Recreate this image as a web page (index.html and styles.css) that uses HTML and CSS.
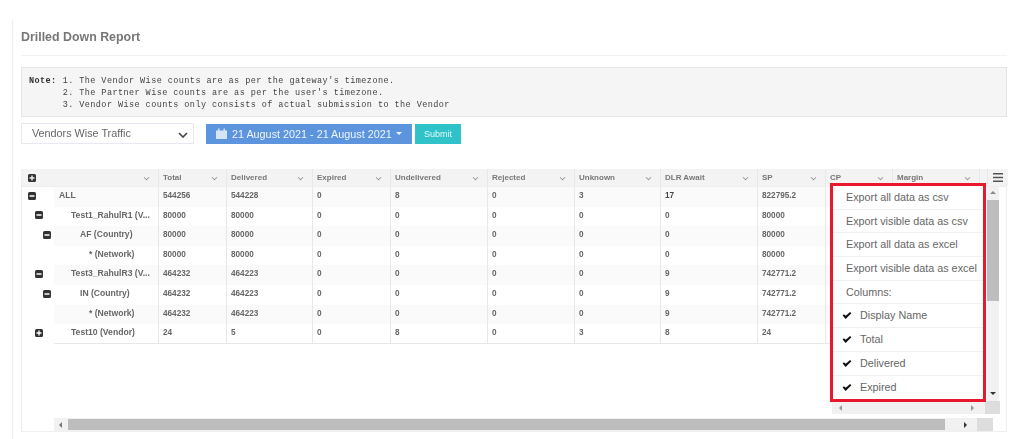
FILE: index.html
```html
<!DOCTYPE html>
<html lang="en">
<head>
<meta charset="utf-8">
<title>Drilled Down Report</title>
<link rel="stylesheet" href="styles.css">
</head>
<body>
<div class="page">
  <h1 class="title">Drilled Down Report</h1>
  <div class="note"><b>Note:</b><pre class="note-lines">1. The Vendor Wise counts are as per the gateway's timezone.
2. The Partner Wise counts are as per the user's timezone.
3. Vendor Wise counts only consists of actual submission to the Vendor</pre></div>
  <div class="controls">
    <div class="select">Vendors Wise Traffic
      <svg class="sel-chev" width="10" height="6" viewBox="0 0 10 6"><path d="M1 1l4 4 4-4" fill="none" stroke="#444" stroke-width="1.6"/></svg>
    </div>
    <div class="date-btn">
      <svg width="11" height="11" viewBox="0 0 11 11"><path d="M0 2.500h11V11H0zM2 0.500h1.500V3H2zM7.500 0.500H9V3H7.500z" fill="#d5e3f6"/></svg>
      <span>21 August 2021 - 21 August 2021</span><i class="caret"></i>
    </div>
    <div class="submit">Submit</div>
  </div>
  <div class="grid">
    <div class="head">
      <div class="c c0"><svg class="box" viewBox="0 0 8 8"><path d="M1.500 0h5A1.500 1.500 0 0 1 8 1.500v5A1.500 1.500 0 0 1 6.500 8h-5A1.500 1.500 0 0 1 0 6.500v-5A1.500 1.500 0 0 1 1.500 0zM3.300 1.500v1.800H1.500v1.400h1.800v1.800h1.400V4.700h1.800V3.300H4.700V1.500z" fill="#333"/></svg></div>
      <div class="c c1"><i class="chev"></i></div>
      <div class="c c2">Total<i class="chev"></i></div>
      <div class="c c3">Delivered<i class="chev"></i></div>
      <div class="c c4">Expired<i class="chev"></i></div>
      <div class="c c5">Undelivered<i class="chev"></i></div>
      <div class="c c6">Rejected<i class="chev"></i></div>
      <div class="c c7">Unknown<i class="chev"></i></div>
      <div class="c c8">DLR Await<i class="chev"></i></div>
      <div class="c c9">SP<i class="chev"></i></div>
      <div class="c c10">CP<i class="chev"></i></div>
      <div class="c c11">Margin<i class="chev"></i></div>
      <div class="c c12"><div class="menu-btn"><svg width="10" height="9" viewBox="0 0 10 9"><path d="M0 0h10v1.600H0zM0 3.700h10v1.600H0zM0 7.400h10V9H0z" fill="#555"/></svg></div></div>
    </div>
    <div class="row odd">
      <div class="c c0 l0"><svg class="box" viewBox="0 0 8 8"><path d="M1.500 0h5A1.500 1.500 0 0 1 8 1.500v5A1.500 1.500 0 0 1 6.500 8h-5A1.500 1.500 0 0 1 0 6.500v-5A1.500 1.500 0 0 1 1.500 0zM1.500 3.200v1.600h5V3.200z" fill="#333"/></svg></div>
      <div class="c c1 n0">ALL</div><div class="c c2">544256</div><div class="c c3">544228</div><div class="c c4">0</div><div class="c c5">8</div><div class="c c6">0</div><div class="c c7">3</div><div class="c c8 dk">17</div><div class="c c9">822795.2</div><div class="c c10"></div><div class="c c11"></div>
    </div>
    <div class="row">
      <div class="c c0 l1"><svg class="box" viewBox="0 0 8 8"><path d="M1.500 0h5A1.500 1.500 0 0 1 8 1.500v5A1.500 1.500 0 0 1 6.500 8h-5A1.500 1.500 0 0 1 0 6.500v-5A1.500 1.500 0 0 1 1.500 0zM1.500 3.200v1.600h5V3.200z" fill="#333"/></svg></div>
      <div class="c c1 n1">Test1_RahulR1 (V...</div><div class="c c2">80000</div><div class="c c3">80000</div><div class="c c4">0</div><div class="c c5">0</div><div class="c c6">0</div><div class="c c7">0</div><div class="c c8">0</div><div class="c c9">80000</div><div class="c c10"></div><div class="c c11"></div>
    </div>
    <div class="row odd">
      <div class="c c0 l2"><svg class="box" viewBox="0 0 8 8"><path d="M1.500 0h5A1.500 1.500 0 0 1 8 1.500v5A1.500 1.500 0 0 1 6.500 8h-5A1.500 1.500 0 0 1 0 6.500v-5A1.500 1.500 0 0 1 1.500 0zM1.500 3.200v1.600h5V3.200z" fill="#333"/></svg></div>
      <div class="c c1 n2">AF (Country)</div><div class="c c2">80000</div><div class="c c3">80000</div><div class="c c4">0</div><div class="c c5">0</div><div class="c c6">0</div><div class="c c7">0</div><div class="c c8">0</div><div class="c c9">80000</div><div class="c c10"></div><div class="c c11"></div>
    </div>
    <div class="row">
      <div class="c c0"></div>
      <div class="c c1 n3">* (Network)</div><div class="c c2">80000</div><div class="c c3">80000</div><div class="c c4">0</div><div class="c c5">0</div><div class="c c6">0</div><div class="c c7">0</div><div class="c c8">0</div><div class="c c9">80000</div><div class="c c10"></div><div class="c c11"></div>
    </div>
    <div class="row odd">
      <div class="c c0 l1"><svg class="box" viewBox="0 0 8 8"><path d="M1.500 0h5A1.500 1.500 0 0 1 8 1.500v5A1.500 1.500 0 0 1 6.500 8h-5A1.500 1.500 0 0 1 0 6.500v-5A1.500 1.500 0 0 1 1.500 0zM1.500 3.200v1.600h5V3.200z" fill="#333"/></svg></div>
      <div class="c c1 n1">Test3_RahulR3 (V...</div><div class="c c2">464232</div><div class="c c3">464223</div><div class="c c4">0</div><div class="c c5">0</div><div class="c c6">0</div><div class="c c7">0</div><div class="c c8">9</div><div class="c c9">742771.2</div><div class="c c10"></div><div class="c c11"></div>
    </div>
    <div class="row">
      <div class="c c0 l2"><svg class="box" viewBox="0 0 8 8"><path d="M1.500 0h5A1.500 1.500 0 0 1 8 1.500v5A1.500 1.500 0 0 1 6.500 8h-5A1.500 1.500 0 0 1 0 6.500v-5A1.500 1.500 0 0 1 1.500 0zM1.500 3.200v1.600h5V3.200z" fill="#333"/></svg></div>
      <div class="c c1 n2">IN (Country)</div><div class="c c2">464232</div><div class="c c3">464223</div><div class="c c4">0</div><div class="c c5">0</div><div class="c c6">0</div><div class="c c7">0</div><div class="c c8">9</div><div class="c c9">742771.2</div><div class="c c10"></div><div class="c c11"></div>
    </div>
    <div class="row odd">
      <div class="c c0"></div>
      <div class="c c1 n3">* (Network)</div><div class="c c2">464232</div><div class="c c3">464223</div><div class="c c4">0</div><div class="c c5">0</div><div class="c c6">0</div><div class="c c7">0</div><div class="c c8">9</div><div class="c c9">742771.2</div><div class="c c10"></div><div class="c c11"></div>
    </div>
    <div class="row last">
      <div class="c c0 l1"><svg class="box" viewBox="0 0 8 8"><path d="M1.500 0h5A1.500 1.500 0 0 1 8 1.500v5A1.500 1.500 0 0 1 6.500 8h-5A1.500 1.500 0 0 1 0 6.500v-5A1.500 1.500 0 0 1 1.500 0zM3.300 1.500v1.800H1.500v1.400h1.800v1.800h1.400V4.700h1.800V3.300H4.700V1.500z" fill="#333"/></svg></div>
      <div class="c c1 n1">Test10 (Vendor)</div><div class="c c2">24</div><div class="c c3">5</div><div class="c c4">0</div><div class="c c5">8</div><div class="c c6">0</div><div class="c c7">3</div><div class="c c8">8</div><div class="c c9">24</div><div class="c c10"></div><div class="c c11"></div>
    </div>
    <div class="hscroll">
      <span class="arrow-l"></span><span class="thumb"></span><span class="arrow-r"></span><span class="corner"></span>
    </div>
    <div class="vscroll">
      <span class="arrow-u"></span><span class="vthumb"></span><span class="arrow-d"></span>
    </div>
    <div class="menu-hscroll"><span class="arrow-l"></span><span class="arrow-r"></span><span class="corner"></span></div>
    <ul class="menu">
      <li>Export all data as csv</li>
      <li>Export visible data as csv</li>
      <li>Export all data as excel</li>
      <li>Export visible data as excel</li>
      <li>Columns:</li>
      <li class="chk"><svg width="10" height="7" viewBox="0 0 11 8"><path d="M0.500 4l1.500-1.500L4 4.300 9 0l1.500 1.500L4 8z" fill="#111"/></svg>Display Name</li>
      <li class="chk"><svg width="10" height="7" viewBox="0 0 11 8"><path d="M0.500 4l1.500-1.500L4 4.300 9 0l1.500 1.500L4 8z" fill="#111"/></svg>Total</li>
      <li class="chk"><svg width="10" height="7" viewBox="0 0 11 8"><path d="M0.500 4l1.500-1.500L4 4.300 9 0l1.500 1.500L4 8z" fill="#111"/></svg>Delivered</li>
      <li class="chk"><svg width="10" height="7" viewBox="0 0 11 8"><path d="M0.500 4l1.500-1.500L4 4.300 9 0l1.500 1.500L4 8z" fill="#111"/></svg>Expired</li>
    </ul>
  </div>
</div>
</body>
</html>
```
FILE: styles.css
```css
* { box-sizing: border-box; }
html, body { margin: 0; height: 100%; background: #fff; overflow: hidden; }
body { padding: 20px 0 0 12px; font-family: "Liberation Sans", Arial, sans-serif; color: #666; }
.page { height: 419px; border-left: 1px solid #eee; padding: 0 22px 0 8px; filter: blur(0.6px); }
.title { margin: 0 0 11px; height: 36px; padding: 11px 0 0; border-bottom: 1px solid #f2f2f2; font-size: 12.400px; line-height: 13px; font-weight: 700; color: #777; }
.note { display: flex; gap: 6px; margin: 0; height: 50px; padding: 7px 7px; background: #f5f5f5; border: 1px solid #e6e6e6; font: 8.500px/12.200px "Liberation Mono", monospace; letter-spacing: 0.430px; color: #444; }
.note b { color: #333; flex: none; }
.note-lines { margin: 0; font: inherit; letter-spacing: inherit; white-space: pre; }
.controls { display: flex; align-items: center; margin-top: 6px; height: 21px; }
.select { position: relative; width: 173px; height: 21px; border: 1px solid #e6e9f0; background: #fff; font-size: 10.800px; line-height: 18px; padding-left: 10px; color: #666; }
.sel-chev { position: absolute; right: 5px; top: 8px; }
.date-btn { margin-left: 12px; width: 206px; height: 20px; background: #5c94de; color: #eef4fc; font-size: 10.800px; display: flex; align-items: center; padding-left: 10px; gap: 5px; white-space: nowrap; }
.caret { display: inline-block; border: 3px solid transparent; border-top-color: #eef4fc; border-bottom: 0; margin-left: -1px; }
.submit { margin-left: 3px; width: 46px; height: 20px; background: #30c2c9; color: #e4f8f9; font-size: 9px; line-height: 20px; text-align: center; }
.grid { position: relative; margin-top: 25px; height: 263px; border: 1px solid #efefef; border-top: 0; }
.head, .row { display: flex; height: 19.600px; }
.head { height: 18px; background: #f3f3f3; border-bottom: 1px solid #eee; font-size: 8px; font-weight: 700; color: #777; }
.row { font-size: 8.200px; font-weight: 700; color: #666; }
.row.odd .c:not(.c0) { background: rgba(0, 0, 0, 0.02); }
.c { position: relative; flex: none; height: 100%; padding-left: 4px; border-right: 1px solid #e8e8e8; line-height: 17px; white-space: nowrap; }
.c0 { width: 32px; border-right: 0; padding: 0; display: flex; align-items: center; padding-bottom: 2px; }
.head .c0 { padding-bottom: 0; }
.c1 { width: 105px; font-size: 8.600px; }
.c2 { width: 68px; }
.c3 { width: 86px; }
.c4 { width: 78px; }
.c5 { width: 97px; }
.c6 { width: 87px; }
.c7 { width: 86px; }
.c8 { width: 97px; }
.c9 { width: 68px; }
.c10 { width: 67px; }
.c11 { width: 87px; }
.c12 { width: 28px; border: 0; display: flex; padding: 0 0 0 7px; background: #f3f3f3; }
.menu-btn { flex: 1; display: flex; align-items: center; justify-content: center; border-left: 1px solid #e8e8e8; }
.box { width: 8px; height: 8px; margin-left: 6px; display: block; }
.l1 .box { margin-left: 13px; }
.l2 .box { margin-left: 21px; }
.n0 { padding-left: 5px; }
.n1 { padding-left: 17px; }
.n2 { padding-left: 26px; }
.n3 { padding-left: 35px; }
.dk { color: #444; }
.row.last .c:not(.c0) { border-bottom: 1px solid #e8e8e8; }
.chev { position: absolute; right: 9px; top: 6px; width: 5px; height: 5px; border-right: 1px solid #888; border-bottom: 1px solid #888; transform: rotate(45deg) scale(.8); }
.hscroll { position: absolute; left: 32px; bottom: 0; width: 939px; height: 13px; display: flex; align-items: center; background: #f1f1f1; }
.thumb { display: block; margin-left: 6px; width: 877px; height: 11px; background: #bdbdbd; }
.arrow-l, .arrow-r { display: block; flex: none; width: 0; height: 0; border: 3px solid transparent; }
.arrow-l { margin-left: 5px; border-right-color: #777; border-left: 0; }
.hscroll .arrow-r { margin-left: 19px; border-left-color: #333; border-right: 0; }
.corner { display: block; flex: none; margin-left: auto; width: 16px; height: 100%; background: #ddd; }
.vscroll { position: absolute; right: 7px; top: 18px; width: 12px; height: 214px; background: #f1f1f1; display: flex; flex-direction: column; align-items: center; }
.arrow-u { display: block; margin-top: 4px; border: 3px solid transparent; border-bottom-color: #888; border-top: 0; }
.vthumb { display: block; margin-top: 6px; width: 100%; height: 101px; background: #bdbdbd; }
.arrow-d { display: block; margin-top: auto; margin-bottom: 6px; border: 3px solid transparent; border-top-color: #333; border-bottom: 0; }
.menu-hscroll { position: absolute; left: 810px; top: 232px; width: 168px; height: 13px; background: #f1f1f1; display: flex; align-items: center; padding-left: 7px; }
.menu-hscroll .arrow-r { margin: 0 0 0 129px; border-left-color: #999; border-right: 0; }
.menu-hscroll .arrow-l { margin: 0; border-right-color: #999; }
.menu-hscroll .corner { width: 15px; }
.menu { position: absolute; left: 808px; top: 14px; width: 156px; height: 218.500px; margin: 0; padding: 0; list-style: none; background: #fff; border: 3px solid #e8192c; z-index: 2; font-size: 10.800px; color: #666; }
.menu li { height: 23.700px; border-bottom: 1px solid #f0f0f0; line-height: 23px; padding-left: 13px; white-space: nowrap; }
.menu li:last-child { border-bottom: 0; }
.menu .chk { display: flex; align-items: center; padding-left: 9px; gap: 8px; }
```
